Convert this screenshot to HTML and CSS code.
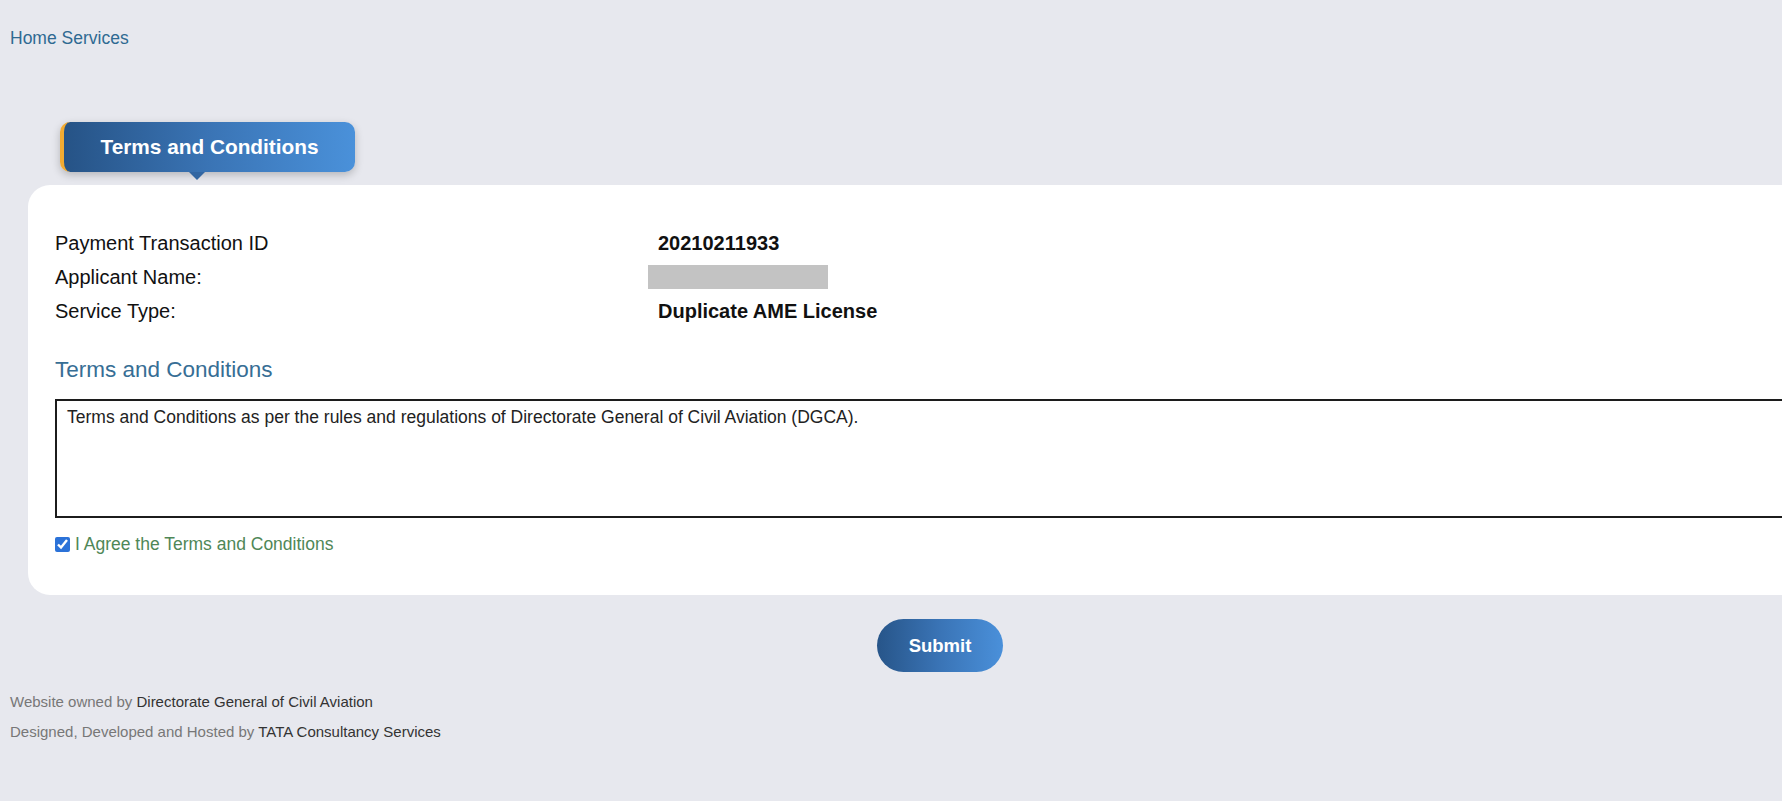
FILE: index.html
```html
<!DOCTYPE html>
<html lang="en">
<head>
<meta charset="utf-8">
<title>Terms and Conditions</title>
<link rel="stylesheet" href="styles.css">
</head>
<body>
<div class="page">
  <nav class="crumb"><a href="#">Home</a> <a href="#">Services</a></nav>

  <div class="tab-wrap">
    <div class="tab">Terms and Conditions</div>
  </div>

  <section class="card">
    <div class="details">
      <div class="label">Payment Transaction ID</div>
      <div class="value">20210211933</div>
      <div class="label">Applicant Name:</div>
      <div class="value"><span class="redacted"></span></div>
      <div class="label">Service Type:</div>
      <div class="value">Duplicate AME License</div>
    </div>

    <h2 class="section-title">Terms and Conditions</h2>
    <div class="terms-box">Terms and Conditions as per the rules and regulations of Directorate General of Civil Aviation (DGCA).</div>

    <label class="agree"><input type="checkbox" checked> <span>I Agree the Terms and Conditions</span></label>
  </section>

  <div class="actions">
    <button class="submit" type="button">Submit</button>
  </div>

  <footer class="footer">
    <p><span class="muted">Website owned by</span> Directorate General of Civil Aviation</p>
    <p><span class="muted">Designed, Developed and Hosted by</span> TATA Consultancy Services</p>
  </footer>
</div>
</body>
</html>
```
FILE: styles.css
```css
html, body {
  margin: 0;
  padding: 0;
  background: #e7e8ee;
  font-family: "Liberation Sans", Arial, sans-serif;
  color: #111;
}

.page {
  width: 1880px;
}

.crumb {
  padding: 29px 10px 0;
  font-size: 17.5px;
  line-height: 18px;
  height: 18px;
}

.crumb a {
  color: #2f6a92;
  text-decoration: none;
}

.tab-wrap {
  margin-top: 75px;
  padding-left: 60px;
}

.tab {
  position: relative;
  box-sizing: border-box;
  width: 295px;
  height: 50px;
  border-left: 4px solid #f2ab32;
  border-radius: 10px;
  background: linear-gradient(90deg, #265386 0%, #3a74b5 50%, #4a91da 100%);
  box-shadow: 0 3px 8px rgba(0, 0, 0, 0.22);
  color: #fff;
  font-weight: bold;
  font-size: 20.8px;
  display: flex;
  align-items: center;
  justify-content: center;
}

.tab::after {
  content: "";
  position: absolute;
  left: 125px;
  bottom: -8px;
  border-left: 8px solid transparent;
  border-right: 8px solid transparent;
  border-top: 8px solid #3266a2;
}

.card {
  margin: 13px 0 0 28px;
  width: 1824px;
  box-sizing: border-box;
  background: #fff;
  border-radius: 22px;
  padding: 41px 27px 41px;
}

.details {
  display: grid;
  grid-template-columns: 603px 1fr;
  font-size: 20px;
  line-height: 34px;
}

.value {
  font-weight: bold;
  display: flex;
  align-items: center;
}

.redacted {
  display: block;
  width: 180px;
  height: 24px;
  margin-left: -10px;
  background: #c3c3c3;
}

.section-title {
  margin: 29px 0 0;
  font-weight: normal;
  font-size: 22.5px;
  line-height: 26px;
  color: #376e95;
}

.terms-box {
  margin-top: 16px;
  height: 119px;
  box-sizing: border-box;
  border: 2px solid #1c1c1c;
  padding: 6px 10px;
  font-size: 17.5px;
  line-height: 20px;
  color: #222;
}

.agree {
  margin-top: 16px;
  display: flex;
  align-items: center;
  height: 20px;
  font-size: 17.5px;
  color: #4f8757;
}

.agree input {
  margin: 0 5px 0 0;
  width: 15px;
  height: 15px;
  accent-color: #2b72d8;
}

.actions {
  margin-top: 24px;
  display: flex;
  justify-content: center;
}

.submit {
  width: 126px;
  height: 53px;
  border: none;
  border-radius: 27px;
  background: linear-gradient(90deg, #275589 0%, #3a74b6 50%, #4a90da 100%);
  color: #fff;
  font-family: "Liberation Sans", Arial, sans-serif;
  font-weight: bold;
  font-size: 18.5px;
  cursor: pointer;
}

.footer {
  margin-top: 15px;
  padding-left: 10px;
  font-size: 15px;
  line-height: 30px;
  color: #333;
}

.footer p {
  margin: 0;
}

.footer .muted {
  color: #777;
}
```
